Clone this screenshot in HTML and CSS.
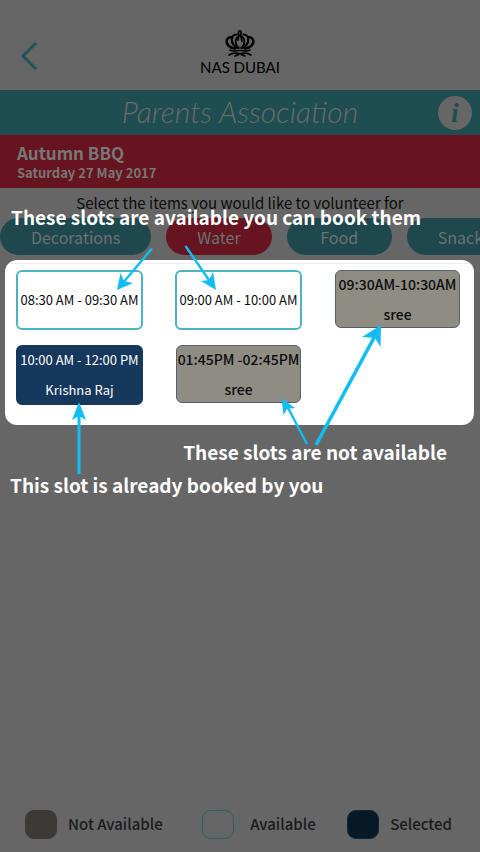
FILE: index.html
```html
<!DOCTYPE html>
<html lang="en">
<head>
<meta charset="utf-8">
<meta name="viewport" content="width=device-width, initial-scale=1">
<title>Parents Association</title>
<link rel="stylesheet" href="styles.css">
</head>
<body>
<div class="page">
  <header class="topbar">
    <button class="back" type="button" aria-label="Back">
      <svg width="18" height="30" viewBox="0 0 18 30"><path d="M16 2 L3 15 L16 28" fill="none" stroke="currentColor" stroke-width="3"/></svg>
    </button>
    <div class="brand">
      <svg class="crest" width="30" height="28" viewBox="0 0 30 28" fill="none" stroke="currentColor" stroke-width="2" stroke-linecap="round">
        <path d="M14 7 C9 10 10 16 14 19 M16 7 C21 10 20 16 16 19" stroke-width="1.800"/>
        <path d="M13.500 6 C13 3 14 1.500 15.500 2 C17 3 15.500 5 16 8 C16.500 10 17 11 17 12" stroke-width="1.800"/>
        <path d="M14 6 L13 11" stroke-width="1.800"/>
        <path d="M11.500 5.500 C5 6 5 15 12.500 19 M18.500 5.500 C25 6 25 15 17.500 19" stroke-width="2.200"/>
        <path d="M7 8 C-1 8 0 18 10 19.500 M23 8 C31 8 30 18 20 19.500" stroke-width="2.600"/>
        <path d="M5 21 C9 23 12 21.500 15 21.500 C18 21.500 21 23 25 21" stroke-width="1.600"/>
        <path d="M4 26 C8 23 12 24 15 25 C18 24 22 23 26 26 M10 27 L13 26 M20 27 L17 26" stroke-width="1.600"/>
      </svg>
      <span class="brand-name">NAS DUBAI</span>
    </div>
  </header>

  <div class="band">
    <h1 class="band-title">Parents Association</h1>
    <button class="info" type="button" aria-label="Information">i</button>
  </div>

  <section class="event">
    <h2 class="event-name">Autumn BBQ</h2>
    <p class="event-date">Saturday 27 May 2017</p>
  </section>

  <p class="prompt">Select the items you would like to volunteer for</p>

  <nav class="items">
    <button class="item" type="button">Decorations</button>
    <button class="item item-active" type="button">Water</button>
    <button class="item" type="button">Food</button>
    <button class="item" type="button">Snacks</button>
  </nav>

  <main class="tour">
    <p class="caption caption-top">These slots are available you can book them</p>
    <div class="slots">
      <button class="slot" type="button">08:30 AM - 09:30 AM</button>
      <button class="slot" type="button">09:00 AM - 10:00 AM</button>
      <button class="slot slot-taken" type="button"><span>09:30AM-10:30AM</span><span>sree</span></button>
      <button class="slot slot-mine" type="button"><span>10:00 AM - 12:00 PM</span><span>Krishna Raj</span></button>
      <button class="slot slot-taken" type="button"><span>01:45PM -02:45PM</span><span>sree</span></button>
    </div>
    <p class="caption caption-taken">These slots are not available</p>
    <p class="caption caption-mine">This slot is already booked by you</p>
    <svg class="arrows" width="480" height="240" viewBox="0 240 480 240" fill="#12bdf5" stroke="#12bdf5">
      <g stroke-width="2.400">
        <path d="M152 248.500 L122 284"/>
        <path d="M185.500 246 L211 283"/>
        <path d="M307 444 L287 406"/>
      </g>
      <path d="M79 474 V410" stroke-width="3"/>
      <path d="M316 445 L376 334" stroke-width="3.600"/>
      <g stroke="none">
        <path d="M117 290 L120.500 273 L124 281 L133 283Z"/>
        <path d="M216 290 L213 272 L209 280 L201 281Z"/>
        <path d="M79 402 L86 420 L79 416 L72 420Z"/>
        <path d="M381 325 L380.500 347 L375 338 L362 337Z"/>
        <path d="M281.500 398 L283.500 415 L287 409 L295 408Z"/>
      </g>
    </svg>
  </main>

  <footer class="legend">
    <span class="key"><i class="swatch swatch-taken"></i>Not Available</span>
    <span class="key key-free"><i class="swatch swatch-free"></i>Available</span>
    <span class="key"><i class="swatch swatch-mine"></i>Selected</span>
  </footer>
</div>
</body>
</html>
```
FILE: styles.css
```css
* {
  box-sizing: border-box;
}

body {
  margin: 0;
  background: #666;
  color: #0c0c0c;
  font-family: "Noto Sans CJK SC", "Open Sans", sans-serif;
}

h1, h2, p {
  margin: 0;
}

button {
  padding: 0;
  border: 0;
  font: inherit;
  color: inherit;
}

.page {
  display: flex;
  flex-direction: column;
  min-height: 100vh;
  overflow: hidden;
}

.topbar {
  display: grid;
  grid-template-columns: 58px 1fr 58px;
  height: 90px;
}

.back {
  display: flex;
  align-items: center;
  justify-content: center;
  padding-top: 22px;
  background: none;
  color: #1e5358;
}

.brand {
  display: flex;
  flex-direction: column;
  align-items: center;
  padding-top: 29px;
  color: #000;
}

.brand-name {
  font: 15px/20px Lato, sans-serif;
}

.band {
  display: grid;
  grid-template-columns: 42px 1fr 42px;
  align-items: center;
  height: 45px;
  background: #1e4d52;
  color: #6b6b6b;
}

.band-title {
  grid-column: 2;
  padding-bottom: 4px;
  text-align: center;
  font: italic 300 30px/36px Lato, sans-serif;
}

.info {
  width: 34px;
  height: 34px;
  border-radius: 50%;
  background: #666;
  color: #1e4d52;
  font: italic bold 28px/34px "Liberation Serif", serif;
}

.event {
  height: 53px;
  padding: 6px 17px;
  background: #66141f;
  color: #777;
}

.event-name {
  font-size: 17px;
  line-height: 24px;
  font-weight: 700;
}

.event-date {
  font-size: 13px;
  line-height: 16px;
  font-weight: 700;
}

.prompt {
  padding-top: 3px;
  text-align: center;
  font-size: 15px;
  line-height: 24px;
}

.items {
  display: flex;
  gap: 15px;
  margin-top: 3px;
}

.item {
  flex: none;
  min-width: 105px;
  height: 37px;
  padding: 0 31px;
  border-radius: 19px;
  background: #1e484d;
  color: #6b7273;
  font-size: 16px;
}

.item-active {
  background: #66141f;
}

.tour {
  position: relative;
  flex: 1;
  padding: 5px 6px 0 5px;
}

.caption {
  color: #fff;
  font-size: 19px;
  line-height: 33px;
  font-weight: 700;
}

.caption-top {
  position: absolute;
  top: -55px;
  left: 11px;
  white-space: nowrap;
}

.caption-taken {
  margin-top: 10px;
  padding-right: 27px;
  text-align: right;
}

.caption-mine {
  padding-left: 5px;
}

.slots {
  display: grid;
  grid-template-columns: repeat(3, 1fr);
  grid-auto-rows: 60px;
  gap: 15px 32px;
  padding: 10px 13px 20px 11px;
  border-radius: 12px;
  background: linear-gradient(#eee, #eee) 0 3px / 100% 1px no-repeat #fff;
}

.slot {
  display: flex;
  flex-direction: column;
  align-items: center;
  justify-content: center;
  border: 2px solid #4bb3c3;
  border-radius: 6px;
  background: #fff;
  font-size: 13px;
  line-height: 30px;
  white-space: nowrap;
}

.slot-taken {
  height: 58px;
  margin: 0 1px;
  border: 1px solid #56626a;
  background: #8f8c84;
  font-size: 14px;
  font-weight: 500;
}

.slot-mine {
  border-color: #16385c;
  background: #16385c;
  color: #fff;
}

.arrows {
  position: absolute;
  top: -15px;
  left: 0;
  pointer-events: none;
}

.legend {
  display: flex;
  justify-content: space-between;
  padding: 0 28px 13px 25px;
  font-size: 15px;
  line-height: 30px;
  font-weight: 500;
  color: #1b1b1b;
}

.key {
  display: flex;
  align-items: center;
  gap: 11px;
}

.key-free {
  gap: 16px;
  margin-left: 8px;
}

.swatch {
  width: 32px;
  height: 29px;
  border: 1px solid #3b3a37;
  border-radius: 9px;
}

.swatch-taken {
  background: #3b3a37;
}

.swatch-free {
  border-color: #2d6065;
}

.swatch-mine {
  border-color: #10283a;
  background: #071826;
}
```
